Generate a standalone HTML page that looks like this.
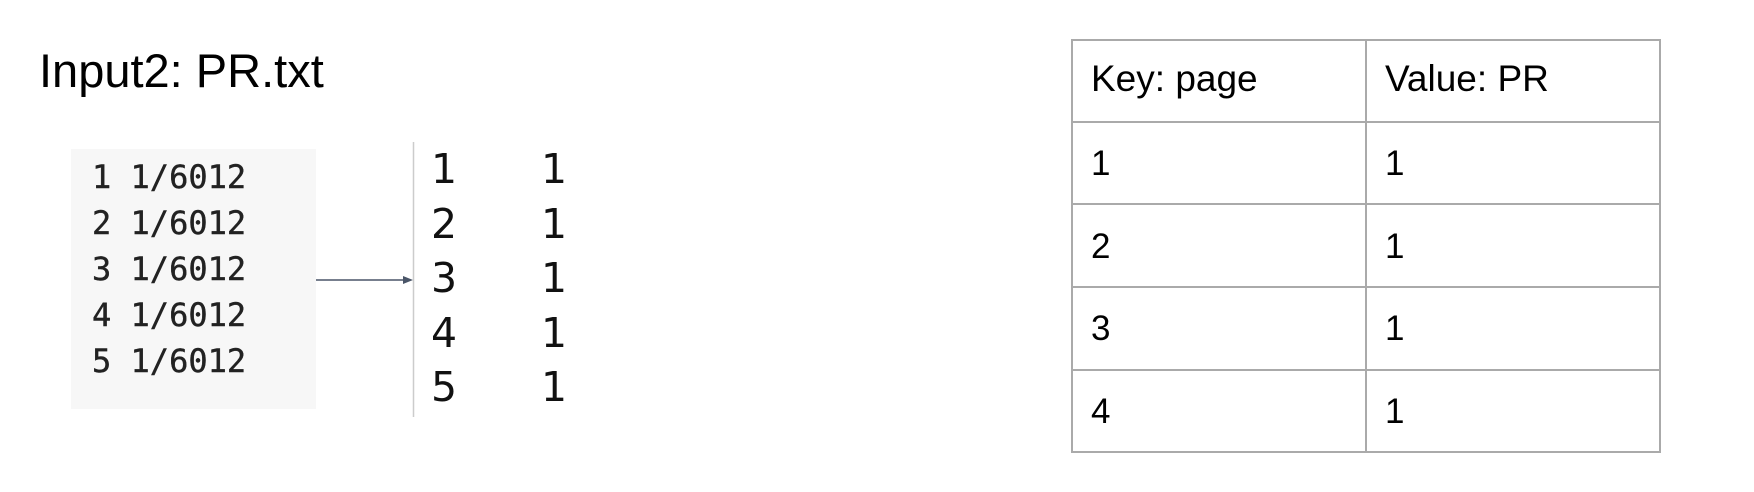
<!DOCTYPE html>
<html><head><meta charset="utf-8"><style>
html,body{margin:0;padding:0;background:#fff;width:1754px;height:492px;overflow:hidden;position:relative}
.a{position:absolute;white-space:pre}
.t{font-family:"Liberation Sans",Arial,sans-serif;color:#000}
.m{font-family:"DejaVu Sans Mono",monospace;font-size:32px;color:#222;line-height:46px;-webkit-text-stroke:0.4px #222}
.n{font-family:"DejaVu Sans",sans-serif;font-size:41px;color:#111}
.h{position:absolute;background:#aaa}
</style></head><body>
<div class="a t" style="left:39px;top:44px;font-size:47px;line-height:54px">Input2: PR.txt</div>
<div class="a" style="left:71px;top:149px;width:245px;height:260px;background:#f7f7f7"></div>
<div class="a m" style="left:92px;top:154px">1 1/6012
2 1/6012
3 1/6012
4 1/6012
5 1/6012</div>
<svg class="a" style="left:0;top:0" width="1754" height="492">
<line x1="316" y1="280" x2="404" y2="280" stroke="#4a5568" stroke-width="1.5"/>
<polygon points="413,280 403,276 403,284" fill="#4a5568"/>
<line x1="413.5" y1="142" x2="413.5" y2="417" stroke="#ccc" stroke-width="1.5"/>
</svg>
<div class="a n" style="left:431px;top:142px;line-height:54.5px">1
2
3
4
5</div>
<div class="a n" style="left:541px;top:142px;line-height:54.5px">1
1
1
1
1</div>
<div class="h" style="left:1071px;top:39px;width:590px;height:2px"></div>
<div class="h" style="left:1071px;top:121px;width:590px;height:2px"></div>
<div class="h" style="left:1071px;top:203px;width:590px;height:2px"></div>
<div class="h" style="left:1071px;top:286px;width:590px;height:2px"></div>
<div class="h" style="left:1071px;top:369px;width:590px;height:2px"></div>
<div class="h" style="left:1071px;top:451px;width:590px;height:2px"></div>
<div class="h" style="left:1071px;top:39px;width:2px;height:414px"></div>
<div class="h" style="left:1365px;top:39px;width:2px;height:414px"></div>
<div class="h" style="left:1659px;top:39px;width:2px;height:414px"></div>
<div class="a t" style="left:1091px;top:58px;font-size:37px;line-height:42px">Key: page</div>
<div class="a t" style="left:1385px;top:58px;font-size:37px;line-height:42px">Value: PR</div>
<div class="a t" style="left:1091px;top:123px;font-size:35px;line-height:82.5px">1
2
3
4</div>
<div class="a t" style="left:1385px;top:123px;font-size:35px;line-height:82.5px">1
1
1
1</div>
</body></html>
